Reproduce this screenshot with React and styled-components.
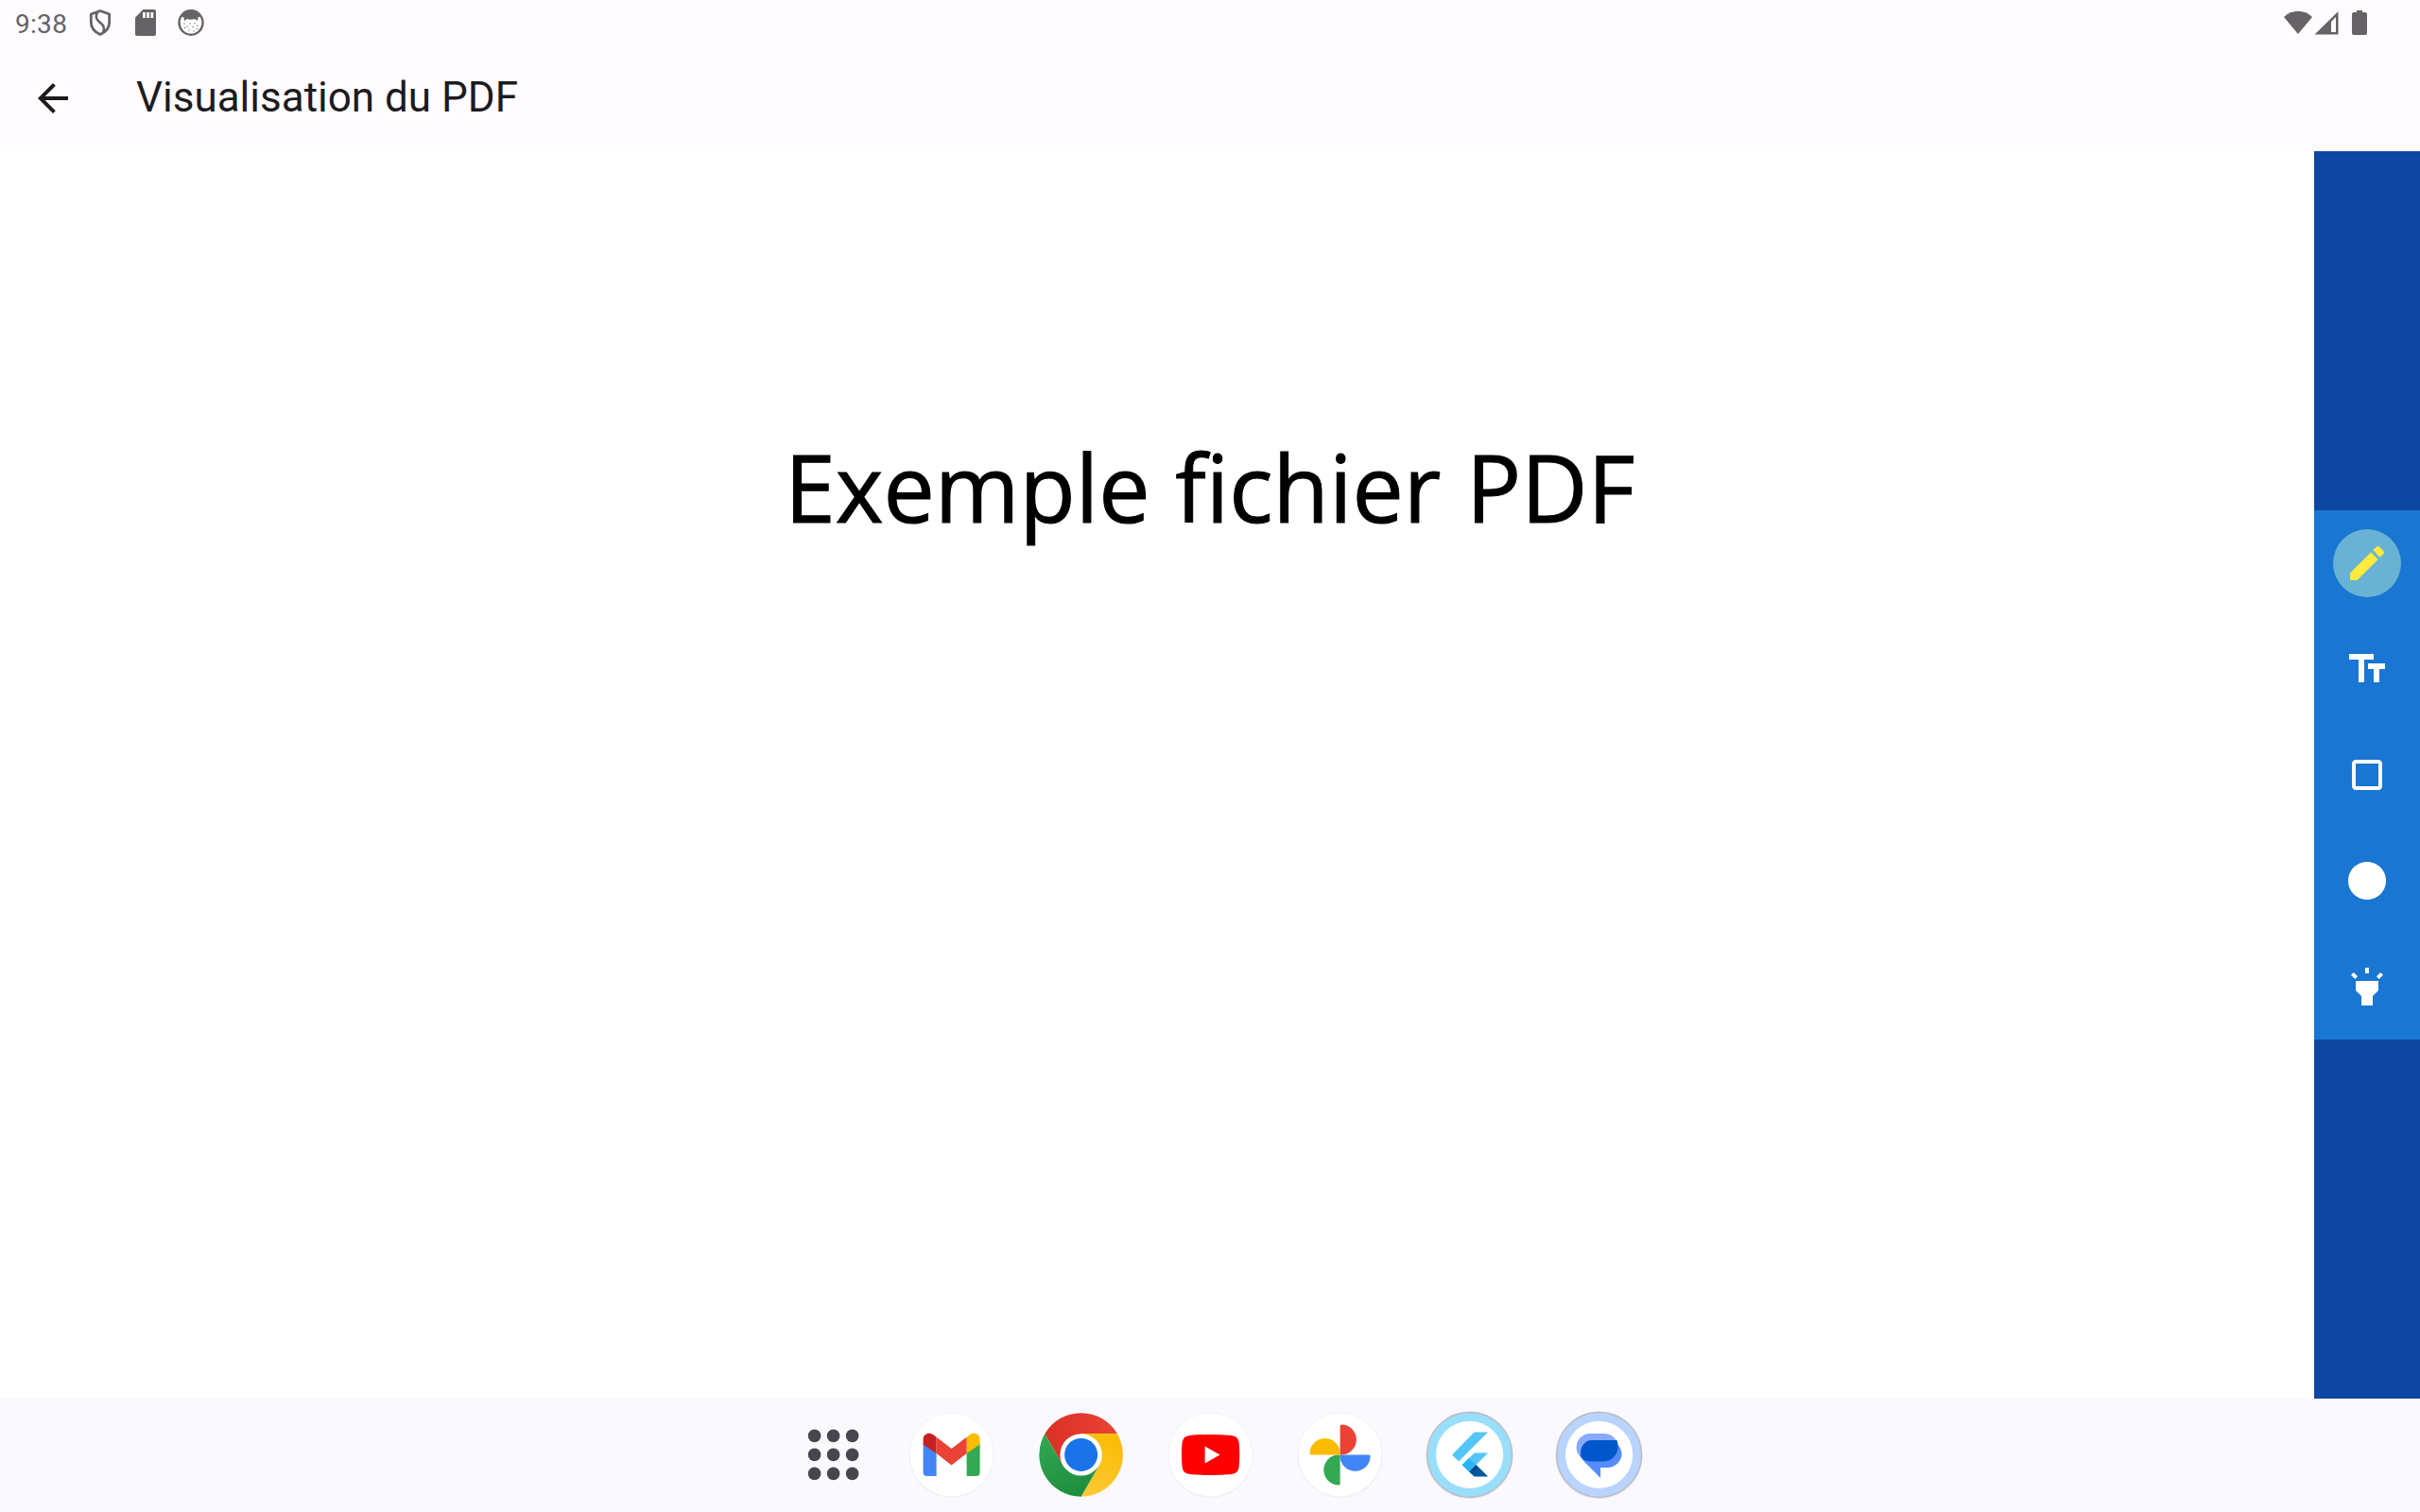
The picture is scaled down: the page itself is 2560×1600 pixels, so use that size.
import React from "react";
import styled, { createGlobalStyle } from "styled-components";

const GlobalStyle = createGlobalStyle`
  *, *::before, *::after { box-sizing: border-box; }
  body { margin: 0; background: #ffffff; font-family: Roboto, sans-serif; }
  svg { display: block; flex: none; }
`;

const Screen = styled.div`
  display: flex;
  flex-direction: column;
  width: 2560px;
  height: 1600px;
  overflow: hidden;
  background: #ffffff;
`;

const StatusBar = styled.header`
  display: flex;
  flex: none;
  align-items: center;
  justify-content: space-between;
  height: 48px;
  padding: 0 55px 0 16px;
  background: #fffbff;
  color: #666367;
`;

const StatusGroup = styled.div`
  display: flex;
  align-items: center;
`;

const Clock = styled.span`
  width: 75px;
  font-size: 28px;
  letter-spacing: 0.3px;
  line-height: 48px;
  padding-top: 4px;
`;

const AppBar = styled.div`
  display: flex;
  flex: none;
  align-items: center;
  gap: 64px;
  height: 112px;
  padding: 0 32px;
  background: #fffbff;
  color: #1d1b1e;
`;

const Title = styled.h1`
  margin: 0;
  font-size: 44px;
  font-weight: 400;
  line-height: 56px;
  padding-bottom: 2px;
`;

const BackButton = styled.button`
  width: 48px;
  height: 48px;
  padding: 0;
  border: 0;
  background: none;
  color: inherit;
`;

const Main = styled.main`
  display: flex;
  flex: 1;
  min-height: 0;
`;

const Page = styled.section`
  flex: 1;
  padding: 295px 0 0 830px;
`;

const PageHeading = styled.h2`
  width: max-content;
  margin: 0;
  font-family: "Open Sans", sans-serif;
  font-size: 98px;
  font-weight: 400;
  font-variant-ligatures: none;
  word-spacing: 1.5px;
  line-height: 120px;
  color: #000000;
  -webkit-text-stroke: 1px #000000;
  stroke-linejoin: round;
  transform: scaleX(0.988);
  transform-origin: 0 0;
`;

const ToolRail = styled.aside`
  display: flex;
  flex: none;
  flex-direction: column;
  justify-content: center;
  width: 112px;
  background: #0d47a1;
`;

const Tool = styled.button`
  display: grid;
  place-items: center;
  height: 112px;
  padding: 0;
  border: 0;
  background: #1976d2;
  color: ${(p) => (p.$active ? "#ffeb3b" : "#ffffff")};
`;

const ToolHalo = styled.span`
  display: grid;
  place-items: center;
  width: 72px;
  height: 72px;
  border-radius: 50%;
  background: ${(p) => (p.$active ? "#68b2d3" : "transparent")};
`;

const Dock = styled.nav`
  display: flex;
  flex: none;
  align-items: flex-start;
  height: 120px;
  padding: 12px 0 0 834px;
  background: #faf9ff;
`;

const DockItem = styled.div`
  width: ${(p) => p.$width || 137}px;
  flex: none;
`;

const Icon = ({ d, size = 48 }) => (
  <svg width={size} height={size} viewBox="0 0 24 24" fill="currentColor">
    <path d={d} />
  </svg>
);

const tools = [
  { name: "edit", active: true, d: "M3 17.25V21h3.75L17.81 9.94l-3.75-3.75L3 17.25zM20.71 7.04c.39-.39.39-1.02 0-1.41l-2.34-2.34c-.39-.39-1.02-.39-1.41 0l-1.83 1.83 3.75 3.75 1.83-1.83z" },
  { name: "text", d: "M2.5 4v3h5v12h3V7h5V4h-13zm19 5h-9v3h3v7h3v-7h3V9z" },
  { name: "square", d: "M18 4H6c-1.1 0-2 .9-2 2v12c0 1.1.9 2 2 2h12c1.1 0 2-.9 2-2V6c0-1.1-.9-2-2-2zm0 14H6V6h12v12z" },
  { name: "circle", d: "M12 2C6.47 2 2 6.47 2 12s4.47 10 10 10 10-4.47 10-10S17.53 2 12 2z" },
  { name: "highlight", d: "M6 14l3 3v5h6v-5l3-3V9H6zm5-12h2v3h-2zM3.5 5.875L4.914 4.46l2.12 2.122L5.62 7.997zm13.46.71l2.123-2.12 1.414 1.414L18.375 8z" },
];

const faceDots = [
  [195, 25], [198, 28], [201, 25], [206, 24.5], [209, 27], [204, 28.5], [200, 32], [205, 33], [195.5, 29.5], [208.5, 30.5],
];

const StatusLeftIcons = () => (
  <svg width="130" height="48" viewBox="91 0 130 48">
    <g fill="none" stroke="#666367" strokeWidth="2.8" strokeLinejoin="round">
      <path d="M106 11.5L96.3 15v8.5c0 6 4 10.5 9.7 13 5.7-2.5 9.700-7 9.700-13V15z" />
      <path d="M103 12.5c-2.8 5.5-1 8.5 3 11.5 4 3 5 5.5 3.3 10" />
    </g>
    <path fill="#666367" d="M151.5 10H163a2 2 0 0 1 2 2v24a2 2 0 0 1-2 2h-18a2 2 0 0 1-2-2V18.5z" />
    <path fill="#ffffff" d="M151 13h2.8v6H151zM155.2 13h2.8v6h-2.8zM159.4 13h2.8v6h-2.8z" />
    <ellipse cx="202" cy="24" rx="12.5" ry="12.7" fill="#ffffff" stroke="#666367" strokeWidth="2.4" />
    <path fill="#666367" d="M191 17c2.5-4.5 6-6.5 11-6.5s8.5 2 11 6.5l-3.5 1.5-.5 3.5-3-2c-2.5 1-5.5 1-8 0l-3 2-.5-3.5z" />
    <g fill="#666367">
      {faceDots.map(([x, y]) => <circle key={x} cx={x} cy={y} r="0.65" />)}
    </g>
  </svg>
);

const StatusRightIcons = () => (
  <svg width="90" height="48" viewBox="2415 0 90 48" fill="#666367">
    <path d="M2416 18c8.5-8.5 21.5-8.5 30 0l-15 18z" />
    <path fillRule="evenodd" d="M2448.5 36.5L2473.5 12v24.5zM2466 34h5V18l-5 5z" />
    <path d="M2493 13v-2h6v2h3a2 2 0 0 1 2 2v20a2 2 0 0 1-2 2h-12a2 2 0 0 1-2-2V15a2 2 0 0 1 2-2z" />
  </svg>
);

const AppFrame = ({ children }) => (
  <svg width="96" height="96" viewBox="-47.6 -47.4 96 96">{children}</svg>
);

const WhiteDisc = () => (
  <>
    <circle r="45.3" cy="0.6" fill="#f5f4fa" />
    <circle r="44.6" cy="0.3" fill="#efeef4" />
    <circle r="44" fill="#ffffff" />
  </>
);

const AppsGrid = () => (
  <AppFrame>
    {[-20, 0, 20].map((y) => [-20, 0, 20].map((x) => (
      <circle key={x + "/" + y} cx={x} cy={y} r="6.8" fill="#46464f" />
    )))}
  </AppFrame>
);

const Gmail = () => (
  <AppFrame>
    <WhiteDisc />
    <path fill="#4285f4" d="M-30-12l14 9V22.5h-10a4 4 0 0 1-4-4z" />
    <path fill="#34a853" d="M30-12l-14 9V22.5h10a4 4 0 0 0 4-4z" />
    <path fill="#c5221f" d="M-16-1.5L-30-11v-5.5c0-5.5 6.5-8 11-4.5l3 2.3z" />
    <path fill="#fbbc04" d="M16-1.5L30-11v-5.5c0-5.5-6.5-8-11-4.5l-3 2.3z" />
    <path fill="#ea4335" d="M-16-18.7L0-6.5l16-12.2V-1.5L0 11-16-1.5z" />
  </AppFrame>
);

const Chrome = () => (
  <AppFrame>
    <defs>
      <linearGradient id="cr" x1="0" x2="1"><stop offset="0" stopColor="#d93025" /><stop offset="1" stopColor="#ea4335" /></linearGradient>
      <linearGradient id="cy" x1="0.6" y1="0" x2="0.3" y2="1"><stop offset="0" stopColor="#fbbc04" /><stop offset="1" stopColor="#fcc934" /></linearGradient>
      <linearGradient id="cg" x1="0" y1="0" x2="0.6" y2="1"><stop offset="0" stopColor="#34a853" /><stop offset="1" stopColor="#1e8e3e" /></linearGradient>
    </defs>
    <path fill="url(#cr)" d="M-38.3-22.2A44.3 44.3 0 0 1 38.3-22.2H0L-19.2 11.1z" />
    <path fill="url(#cy)" d="M38.3-22.2A44.3 44.3 0 0 1 0 44.3L19.2 11.1 0-22.2z" />
    <path fill="url(#cg)" d="M0 44.3A44.3 44.3 0 0 1-38.3-22.2L-19.2 11.1H19.2z" />
    <circle r="22.2" fill="#ffffff" />
    <circle r="17.5" fill="#1a73e8" />
  </AppFrame>
);

const YouTube = () => (
  <AppFrame>
    <WhiteDisc />
    <path fill="#ff0000" d="M-22-20.5Q0-22.5 22-20.5Q29-20 30-13Q31.3 0 30 13Q29 20 22 20.5Q0 22.5-22 20.5Q-29 20-30 13Q-31.3 0-30-13Q-29-20-22-20.5z" />
    <path fill="#ffffff" d="M-6-9L10 0-6 9z" />
  </AppFrame>
);

const Photos = () => (
  <AppFrame>
    <WhiteDisc />
    {[["#ea4335", 0], ["#4285f4", 90], ["#34a853", 180], ["#fbbc04", 270]].map(([c, r]) => (
      <path key={c} fill={c} transform={`rotate(${r})`} d="M0 0V-30.5q0-1.5 1.5-1.5C10.5-32 17.3-24.5 17.3-16S10.5 0 1.5 0z" />
    ))}
  </AppFrame>
);

const RingDisc = ({ color }) => (
  <>
    <circle r="46.3" cy="0.3" fill="#e6e5eb" />
    <circle r="44.9" fill={color} stroke="#bcbcc2" strokeWidth="1.3" />
    <circle r="35.6" fill="#ffffff" />
  </>
);

const Flutter = () => (
  <AppFrame>
    <RingDisc color="#99dffc" />
    <path fill="#54c5f8" d="M5-24h14.5L-11.5 7l-7-7z" />
    <path fill="#54c5f8" d="M5-2h14.5L7 10.5-.5 18-8 10.8z" />
    <path fill="#01579b" d="M-.5 18L7 10.5 19.5 23H5z" />
    <path fill="#053a6b" d="M-.5 18L7 10.5 7.5 14.5z" />
    <path fill="#29b6f6" d="M-8 10.8L-.8 3.6 6.7 10.8-.5 18z" />
  </AppFrame>
);

const Messages = () => (
  <AppFrame>
    <RingDisc color="#b8d4ff" />
    <rect x="-24" y="-22.5" width="44" height="29" rx="14.5" fill="#87a9ff" />
    <path fill="#578cff" d="M-19.5-3c0-6 5-12 11-12H10c7 0 14 6.5 14 14.2S17 13.5 10 13.5H1.5V24.5L-16 7c-2.5-2.5-3.5-6-3.5-10z" />
    <path fill="#0057cc" d="M-8-15.3H18.8c4 10-2 22-13.3 22.3H-8c-5 0-9-1.5-11-4.5-2.5-9 3.5-17.8 11-17.8z" />
  </AppFrame>
);

const dockApps = [Gmail, Chrome, YouTube, Photos, Flutter, Messages];

export default function App() {
  return (
    <Screen>
      <GlobalStyle />
      <StatusBar>
        <StatusGroup>
          <Clock>9:38</Clock>
          <StatusLeftIcons />
        </StatusGroup>
        <StatusRightIcons />
      </StatusBar>
      <AppBar>
        <BackButton aria-label="Retour">
          <Icon d="M20 11H7.83l5.59-5.59L12 4l-8 8 8 8 1.41-1.41L7.83 13H20v-2z" />
        </BackButton>
        <Title>Visualisation du PDF</Title>
      </AppBar>
      <Main>
        <Page>
          <PageHeading>Exemple fichier PDF</PageHeading>
        </Page>
        <ToolRail>
          {tools.map((t) => (
            <Tool key={t.name} $active={t.active} aria-label={t.name}>
              <ToolHalo $active={t.active}><Icon d={t.d} /></ToolHalo>
            </Tool>
          ))}
        </ToolRail>
      </Main>
      <Dock>
        <DockItem $width={125}><AppsGrid /></DockItem>
        {dockApps.map((Logo, i) => (
          <DockItem key={i}><Logo /></DockItem>
        ))}
      </Dock>
    </Screen>
  );
}
